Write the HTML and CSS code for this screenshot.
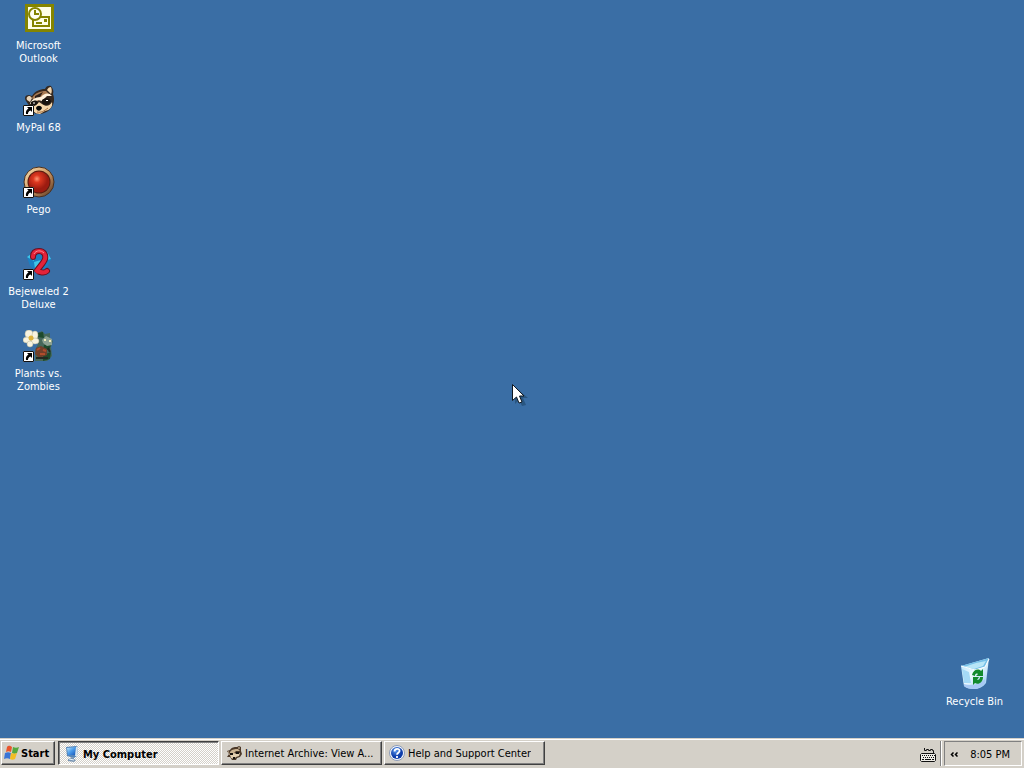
FILE: index.html
```html
<!DOCTYPE html>
<html lang="en">
<head>
<meta charset="utf-8">
<title>Desktop</title>
<link rel="stylesheet" href="styles.css">
</head>
<body>
<svg class="defs" width="0" height="0" aria-hidden="true">
  <defs>
    <symbol id="shortcut" viewBox="0 0 11 11">
      <path d="M0 0h11v11H0z" fill="#fff"/>
      <path d="M.5 .5h10v10h-10z" fill="none" stroke="#111"/>
      <path d="M4 2h5v5L7.600 5.600C5.500 6.300 5 7.500 5 9H3C2.500 6.500 3.500 4.800 5.500 3.600z" fill="#000"/>
    </symbol>
    <symbol id="raccoon" viewBox="0 0 32 32">
      <path d="M3 17C1 14 2 11 6 11l3 1C12 7 17 5 22 5c1-3 4-4 6-3 2 3 3 5 2 8 2 5 1 11-2 14-3 4-8 6-13 6-4 0-7-3-8-7z" fill="#35281f"/>
      <path d="M4 16c-1-2 0-4 3-4l2 2-2 4z" fill="#e8d3b8"/>
      <path d="M24 6c1-2 2-3 4-3 1 3 1 5 0 7z" fill="#f3d5ac"/>
      <path d="M9 14c3-5 8-7 14-7l4 4-8 2-6 6z" fill="#a87a52"/>
      <path d="M12 12l8-4-3 5-5 3z" fill="#2e211a"/>
      <path d="M18 13c3-4 8-5 11-1l-5 0-5 5-4-1-4 3-4 1c1-4 5-7 11-7z" fill="#fff1da"/>
      <path d="M8 21c3 1 6 0 8-3l3 2c4 3 8 2 10-2 1 5-2 8-7 9l-5 3c-5 0-8-3-9-9z" fill="#f4d6aa"/>
      <path d="M19 16c3-3 8-2 9 1-1 4-6 5-9 2zM8 18c3-2 6-2 7 0-1 4-5 5-7 3z" fill="#18130f"/>
      <path d="M13 24c1-3 5-3 6 0-1 3-5 4-6 0z" fill="#080808"/>
      <path d="M23 16.500h2M10 19h2" stroke="#fff"/>
      <path d="M14 28c4 1 7-1 11-4" fill="none" stroke="#a66e40"/>
    </symbol>
    <linearGradient id="screen" x2="1" y2="1"><stop stop-color="#bde9ff"/><stop offset=".5" stop-color="#4a9bea"/><stop offset="1" stop-color="#1555b8"/></linearGradient>
    <radialGradient id="ruby" cx=".4" cy=".35"><stop stop-color="#ff9673"/><stop offset=".35" stop-color="#dd3820"/><stop offset="1" stop-color="#9c1b10"/></radialGradient>
    <linearGradient id="rim" x2="1" y2="1"><stop stop-color="#f8e2b4"/><stop offset=".5" stop-color="#cf9a63"/><stop offset="1" stop-color="#4f2d1d"/></linearGradient>
    <linearGradient id="bin" x2="1" y2="1"><stop stop-color="#a9ddfa"/><stop offset=".45" stop-color="#f0fbff"/><stop offset="1" stop-color="#8cc6f0"/></linearGradient>
    <radialGradient id="help" cx=".4" cy=".3"><stop stop-color="#5c9bf0"/><stop offset="1" stop-color="#0d3ca9"/></radialGradient>
  </defs>
</svg>

<main class="desktop">
  <nav class="icons" aria-label="Desktop icons">
    <button class="icon" type="button">
      <svg class="picture" viewBox="0 0 32 32" aria-hidden="true">
        <path d="M2 2h29v28H2z" fill="#858500"/>
        <path d="M5 5h23v22H5z" fill="#ffffe8"/>
        <path d="M10 15h16v9H10z" fill="#ffffe8" stroke="#858500" stroke-width="2"/>
        <circle cx="12" cy="12" r="6" fill="#fffff2" stroke="#858500" stroke-width="2"/>
        <path d="M12 8v4h4M13 21h6" fill="none" stroke="#858500" stroke-width="2"/>
        <path d="M21 17h3v3h-3z" fill="#858500"/>
      </svg>
      <span>Microsoft Outlook</span>
    </button>
    <button class="icon" type="button">
      <svg class="picture" viewBox="0 0 32 32" aria-hidden="true">
        <use href="#raccoon" width="32" height="32"/>
        <use href="#shortcut" y="21" width="11" height="11"/>
      </svg>
      <span>MyPal 68</span>
    </button>
    <button class="icon" type="button">
      <svg class="picture" viewBox="0 0 32 32" aria-hidden="true">
        <circle cx="16" cy="16" r="15" fill="url(#rim)" stroke="#49301f"/>
        <circle cx="16" cy="16" r="11.500" fill="#5a1b10"/>
        <circle cx="16" cy="16" r="10.500" fill="url(#ruby)"/>
        <use href="#shortcut" y="21" width="11" height="11"/>
      </svg>
      <span>Pego</span>
    </button>
    <button class="icon" type="button">
      <svg class="picture" viewBox="0 0 32 32" aria-hidden="true">
        <path d="M4 9l7-6 13 0 4 8-4 9-8 6-9-8z" fill="#1b7fc2"/>
        <path d="M4 9l7 4 0-9zM24 4l-4 9 8-2zM11 14l7-2-6 9z" fill="#40c6e8"/>
        <path d="M10 9C10 4 13 3 16 3c5 0 7 4 6 8-1 4-6 8-9 13 3-2 7 3 11-1" fill="none" stroke="#6b1020" stroke-width="6" stroke-linecap="round"/>
        <path d="M10 9C10 4 13 3 16 3c5 0 7 4 6 8-1 4-6 8-9 13 3-2 7 3 11-1" fill="none" stroke="#e3233a" stroke-width="4" stroke-linecap="round"/>
        <path d="M11 6c2-4 7-4 10-1" fill="none" stroke="#ff8791"/>
        <use href="#shortcut" y="21" width="11" height="11"/>
      </svg>
      <span>Bejeweled 2 Deluxe</span>
    </button>
    <button class="icon" type="button">
      <svg class="picture" viewBox="0 0 32 32" aria-hidden="true">
        <path d="M13 4l6-3 3 3 5-1 0 5 3 3-2 6 1 9-5 5H12l0-11 3-6z" fill="#45675a"/>
        <path d="M14 3l6-1 1 6-6-1zM21 15l7 0-2 5-6 0zM20 25l8-3-1 7-7 2z" fill="#1d4a2c"/>
        <path d="M19 10l4-4 6 3 0 6-5 1-4-3z" fill="#8ba192"/>
        <path d="M21 10h2M26 11h2" stroke="#f3edba" stroke-width="2"/>
        <path d="M13 18l5-2 6 3 0 6-8 3-4-4z" fill="#713f2a"/>
        <path d="M14 20l3-2M20 20l3 1M17 24h5" stroke="#b04d2c" stroke-width="2"/>
        <path d="M13 28h12M25 18l2 4" stroke="#222a22" stroke-width="2"/>
        <g fill="#f8f3df" stroke="#b9b798" stroke-width=".5">
          <ellipse cx="6" cy="4" rx="4" ry="4"/><ellipse cx="12" cy="5" rx="3" ry="4"/>
          <ellipse cx="4" cy="10" rx="4" ry="3"/><ellipse cx="12" cy="11" rx="4" ry="3"/>
          <ellipse cx="7" cy="14" rx="3" ry="3"/>
        </g>
        <circle cx="8" cy="8" r="2.500" fill="#ddb23a"/>
        <use href="#shortcut" y="21" width="11" height="11"/>
      </svg>
      <span>Plants vs. Zombies</span>
    </button>
  </nav>
  <button class="icon recycle" type="button">
    <svg class="picture" viewBox="0 0 32 32" aria-hidden="true">
      <path d="M2 8L16 4 30 0 27 25c-3 4-7 6-12 6-4 0-8-1-10-3z" fill="url(#bin)"/>
      <path d="M2 8l14-4L30 0l-4 9-11 3z" fill="#74bfe8"/>
      <path d="M5 9l12-4 10-2-3 5-9 3z" fill="#b8e6f7"/>
      <path d="M2 8l14 4 10-3 4-8" fill="none" stroke="#fff"/>
      <path d="M3 11l7 3 2 11-7 0z" fill="#a5daf6"/>
      <path d="M5 26c6 2 15 1 21-5l0 4c-3 4-7 6-12 6-4 0-7-1-9-3z" fill="#a8c9f4"/>
      <path d="M13 17c1-5 6-7 9-4l2-2v7h-7l2-2c-2-1-3 0-3 2zM24 19c0 6-5 8-8 6l-2 2v-8h6l-2 3c2 0 3-1 3-3z" fill="#128a2c"/>
    </svg>
    <span>Recycle Bin</span>
  </button>
  <svg class="pointer" viewBox="0 0 18 24" aria-hidden="true">
    <path d="M3 3v17l4-4 3 6 4-1-3-7h5z" fill="#173d5e" opacity=".5"/>
    <path d="M.5 .5v16l4-3.500 2.500 6 3-1-2.500-6H12z" fill="#fff" stroke="#101820"/>
  </svg>
</main>

<footer class="taskbar">
  <button class="start" type="button">
    <svg class="small" viewBox="0 0 16 16" aria-hidden="true">
      <path d="M3 2c2-2 3-1 5 0L7 7C5 6 4 6 2 7z" fill="#e9542b"/>
      <path d="M9 2c2 1 4 1 6 0l-2 6c-2 1-3 1-5 0z" fill="#55a83d"/>
      <path d="M1 8c2-1 4-1 6 0l-1 6c-2-1-4-1-6 0z" fill="#3975d7"/>
      <path d="M7 8c2 1 4 1 6 0l-2 6c-2 1-3 1-5 0z" fill="#f3bd23"/>
    </svg>
    <span>Start</span>
  </button>
  <nav class="tasks" aria-label="Open windows">
    <button class="task active" type="button" aria-pressed="true">
      <svg class="small" viewBox="0 0 16 16" aria-hidden="true">
        <path d="M2 1l10-1 2 1-1 9-3 2-7-2z" fill="#5685b8"/>
        <path d="M3 2l9-1-1 8-7 0z" fill="url(#screen)"/>
        <path d="M12 1h2l-1 9-2 0z" fill="#d9e6ef"/>
        <path d="M7 11l3 1v1l2 1-2 2-6-1v-2l3-1z" fill="#7895b4"/>
        <path d="M5 13l5 1" stroke="#e8f4fc"/>
      </svg>
      <span>My Computer</span>
    </button>
    <button class="task" type="button">
      <svg class="small" viewBox="0 0 16 16" aria-hidden="true">
        <path d="M1 6l3-1c2-3 4-3 7-3l2-1 2 1v4l1 3-2 3-3 1-1 2H6l-2-3H1l2-3z" fill="#4b3828"/>
        <path d="M4 7c2-3 5-3 8-3l2 2-4 0-3 3-4 1z" fill="#c9b18f"/>
        <path d="M4 10l4-2 3 1 3-1-1 3-3 1-2 2-3-1z" fill="#e4cfaf"/>
        <path d="M4 8h3v2H4zM10 7h3v2h-3zM7 12h2v2H7z" fill="#17120e"/>
        <path d="M13 2v2M2 7h1" stroke="#e4cfaf"/>
      </svg>
      <span>Internet Archive: View A...</span>
    </button>
    <button class="task" type="button">
      <svg class="small" viewBox="0 0 16 16" aria-hidden="true">
        <circle cx="8" cy="8" r="7.500" fill="#f4f7fc" stroke="#8c9bb7"/>
        <circle cx="8" cy="8" r="6" fill="url(#help)"/>
        <path d="M5.500 6.500C5.500 3 11 3 10.500 6.200 10.300 7.800 8 7.800 8 9.800M8 11v2" fill="none" stroke="#fff" stroke-width="1.800"/>
      </svg>
      <span>Help and Support Center</span>
    </button>
  </nav>
  <button class="keyboard" type="button" aria-label="Keyboard">
    <svg class="small" viewBox="0 0 16 16" aria-hidden="true">
      <path d="M4.500 1v2.500h2v-1h2v1h2v-1h2v1h1V7" fill="none" stroke="#111"/>
      <path d="M1.500 6.500h13l1 1v6l-1 1h-13l-1-1v-6z" fill="#eeece6" stroke="#111"/>
      <path d="M2 8.500h13M3 10.500h12" stroke="#111" stroke-dasharray="1 1"/>
      <path d="M2 12.500h2M5 12.500h6M12 12.500h2" stroke="#111"/>
    </svg>
  </button>
  <div class="divider"></div>
  <div class="tray">
    <button class="expand" type="button" aria-label="Show hidden icons">
      <svg class="chevrons" viewBox="0 0 8 5" aria-hidden="true">
        <path d="M3.500 .5l-2 2 2 2M7.500 .5l-2 2 2 2" fill="none" stroke="#000" stroke-width="1.500"/>
      </svg>
    </button>
    <time>8:05 PM</time>
  </div>
</footer>
</body>
</html>
```

FILE: styles.css
```css
* {
  box-sizing: border-box;
}

body {
  margin: 0;
  height: 100vh;
  display: flex;
  flex-direction: column;
  overflow: hidden;
  background: #3a6ea5;
  font: 11px/13px Tahoma, "DejaVu Sans Condensed", "DejaVu Sans", sans-serif;
  color: #000;
}

button {
  margin: 0;
  padding: 0;
  border: 0;
  background: none;
  color: inherit;
  font: inherit;
}

svg {
  display: block;
  flex: none;
}

.defs {
  position: absolute;
}

.desktop {
  position: relative;
  flex: 1;
  min-height: 0;
  display: flex;
  justify-content: space-between;
  padding: 2px 12px 30px 1px;
}

.icons {
  display: grid;
  grid-auto-rows: 82px;
  align-content: start;
}

.icon {
  width: 75px;
  display: flex;
  flex-direction: column;
  align-items: center;
  justify-content: flex-start;
  gap: 5px;
  color: #fff;
  text-align: center;
}

.picture {
  width: 32px;
  height: 32px;
}

.recycle {
  align-self: flex-end;
}

.pointer {
  position: absolute;
  left: 50%;
  top: 52%;
  width: 18px;
  height: 24px;
}

.taskbar {
  height: 30px;
  display: flex;
  align-items: stretch;
  padding: 2px 2px 2px 1px;
  border-top: 1px solid #d4d0c8;
  box-shadow: inset 0 1px #fff;
  background: #d4d0c8;
}

.start,
.task {
  height: 24px;
  display: flex;
  align-items: center;
  border: 1px solid;
  border-color: #fff #404040 #404040 #fff;
  box-shadow: inset -1px -1px #808080;
  white-space: nowrap;
}

.start {
  width: 54px;
  gap: 1px;
  padding-left: 2px;
  font-weight: bold;
}

.tasks {
  flex: 1;
  min-width: 0;
  display: flex;
  gap: 2px;
  margin-left: 3px;
}

.task {
  flex: 0 1 161px;
  min-width: 0;
  gap: 3px;
  padding: 0 4px;
}

.task span {
  overflow: hidden;
}

.active {
  padding-top: 2px;
  padding-left: 5px;
  border-color: #404040 #fff #fff #404040;
  box-shadow: inset 1px 1px #808080;
  background: repeating-conic-gradient(#fff 0 25%, #d4d0c8 0 50%) 0 0 / 2px 2px;
  font-weight: bold;
}

.small {
  width: 16px;
  height: 16px;
}

.keyboard {
  display: flex;
  align-items: center;
  padding: 2px 4px 0;
}

.divider {
  width: 2px;
  margin-right: 2px;
  border-left: 1px solid #808080;
  border-right: 1px solid #fff;
}

.tray {
  display: flex;
  align-items: center;
  gap: 12px;
  padding: 1px 11px 0 5px;
  border: 1px solid;
  border-color: #808080 #fff #fff #808080;
}

.chevrons {
  width: 8px;
  height: 5px;
}
```
